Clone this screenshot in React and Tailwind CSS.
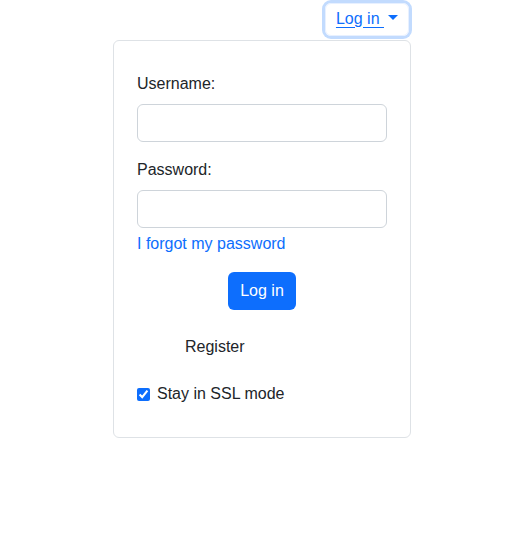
export default function App() {
    return (
        <div className="min-h-[558px] bg-white text-[16px] leading-6 text-[#212529]" style={{ fontFamily: '"Liberation Sans", Arial, sans-serif' }}>
            <div className="ml-[113px] w-[298px]">
                <div className="flex justify-end pt-[3px] pr-[2px]">
                    <button className="box-border flex h-[33px] items-center rounded-[6px] border border-[#e7f0ff] pb-[2px] pl-[10px] pr-[10px] text-[#0d6efd] shadow-[0_0_0_3px_#c2dbfe]">
                        <span className="underline underline-offset-[3px]">Log in&nbsp;</span>
                        <span className="ml-[4px] mt-[-2px] h-0 w-0 border-x-[5px] border-t-[5px] border-x-transparent border-t-[#0d6efd]"></span>
                    </button>
                </div>
                <div className="mt-[4px] rounded-[6px] border border-[#dee2e6] px-[23px] pt-[31px] pb-[31px]">
                    <label className="block">Username:</label>
                    <input type="text" className="mt-2 block h-[38px] w-full rounded-[6px] border border-[#ced4da] px-3 outline-none" />
                    <label className="mt-4 block">Password:</label>
                    <input type="password" className="mt-2 block h-[38px] w-full rounded-[6px] border border-[#ced4da] px-3 outline-none" />
                    <a href="#" className="mt-[4px] block w-fit text-[#0d6efd]">I forgot my password</a>
                    <div className="mt-[16px] flex justify-center">
                        <button className="h-[38px] rounded-[6px] bg-[#0d6efd] px-3 text-white">Log in</button>
                    </div>
                    <div className="mt-[25px] pl-12">Register</div>
                    <label className="mt-[23px] flex items-center gap-[7px]">
                        <input type="checkbox" defaultChecked className="h-[13px] w-[13px] accent-[#0d6efd]" />
                        <span>Stay in SSL mode</span>
                    </label>
                </div>
            </div>
        </div>
    )
}
